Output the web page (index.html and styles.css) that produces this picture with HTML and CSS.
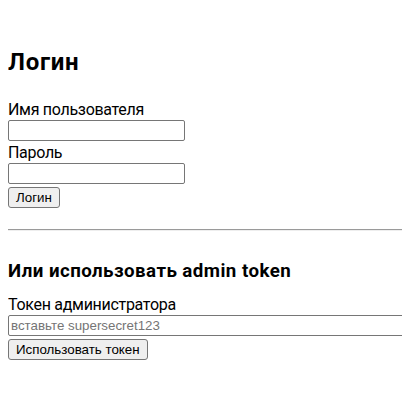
FILE: index.html
```html
<!DOCTYPE html>
<html lang="ru">
<head>
<meta charset="utf-8">
<title>Логин</title>
<link rel="stylesheet" href="styles.css">
</head>
<body>
<div class="page">
  <h2 class="title">Логин</h2>
  <form class="form">
    <label class="label" for="u">Имя пользователя</label>
    <input class="field" id="u" type="text">
    <label class="label" for="p">Пароль</label>
    <input class="field" id="p" type="password">
    <button class="btn" type="button">Логин</button>
  </form>
  <hr class="sep">
  <h3 class="subtitle">Или использовать admin token</h3>
  <div class="form">
    <label class="label" for="t">Токен администратора</label>
    <input class="field token" id="t" type="text" placeholder="вставьте supersecret123">
    <button class="btn" type="button">Использовать токен</button>
  </div>
</div>
</body>
</html>
```

FILE: styles.css
```css
html { background: #fff; }
body {
  margin: 8px 0 8px 8px;
  font-family: Roboto, "Noto Sans", sans-serif;
  font-size: 16px;
  color: #000;
}
.page { padding-top: 18px; overflow: hidden; }
.title {
  font-size: 24px;
  font-weight: bold;
  line-height: 32px;
  letter-spacing: 0.7px;
  margin: 20px 0 20px;
}
.form { display: flex; flex-direction: column; align-items: flex-start; }
.label { line-height: 21px; padding-top: 1px; letter-spacing: -0.3px; }
.field {
  box-sizing: border-box;
  width: 177px;
  height: 21px;
  margin: 0;
  padding: 1px 2px;
  border: 1px solid #767676;
  border-radius: 2px;
  font-family: "Liberation Sans", Arial, sans-serif;
  font-size: 13.333px;
  background: #fff;
}
.field::placeholder { color: #757575; }
.token { width: calc(100% + 10px); }
.btn {
  box-sizing: border-box;
  height: 21px;
  margin-top: 3px;
  padding: 0 7px;
  border: 1px solid #767676;
  border-radius: 3px;
  background: #efefef;
  font-family: "Liberation Sans", Arial, sans-serif;
  font-size: 13.333px;
  color: #000;
}
.sep {
  margin: 21px 0 0;
  border: 0;
  border-top: 1px solid #9a9a9a;
  border-bottom: 1px solid #eee;
  height: 0;
}
.subtitle {
  font-size: 18.72px;
  font-weight: bold;
  line-height: 25px;
  letter-spacing: 0.45px;
  margin: 28px 0 9px;
}
```
